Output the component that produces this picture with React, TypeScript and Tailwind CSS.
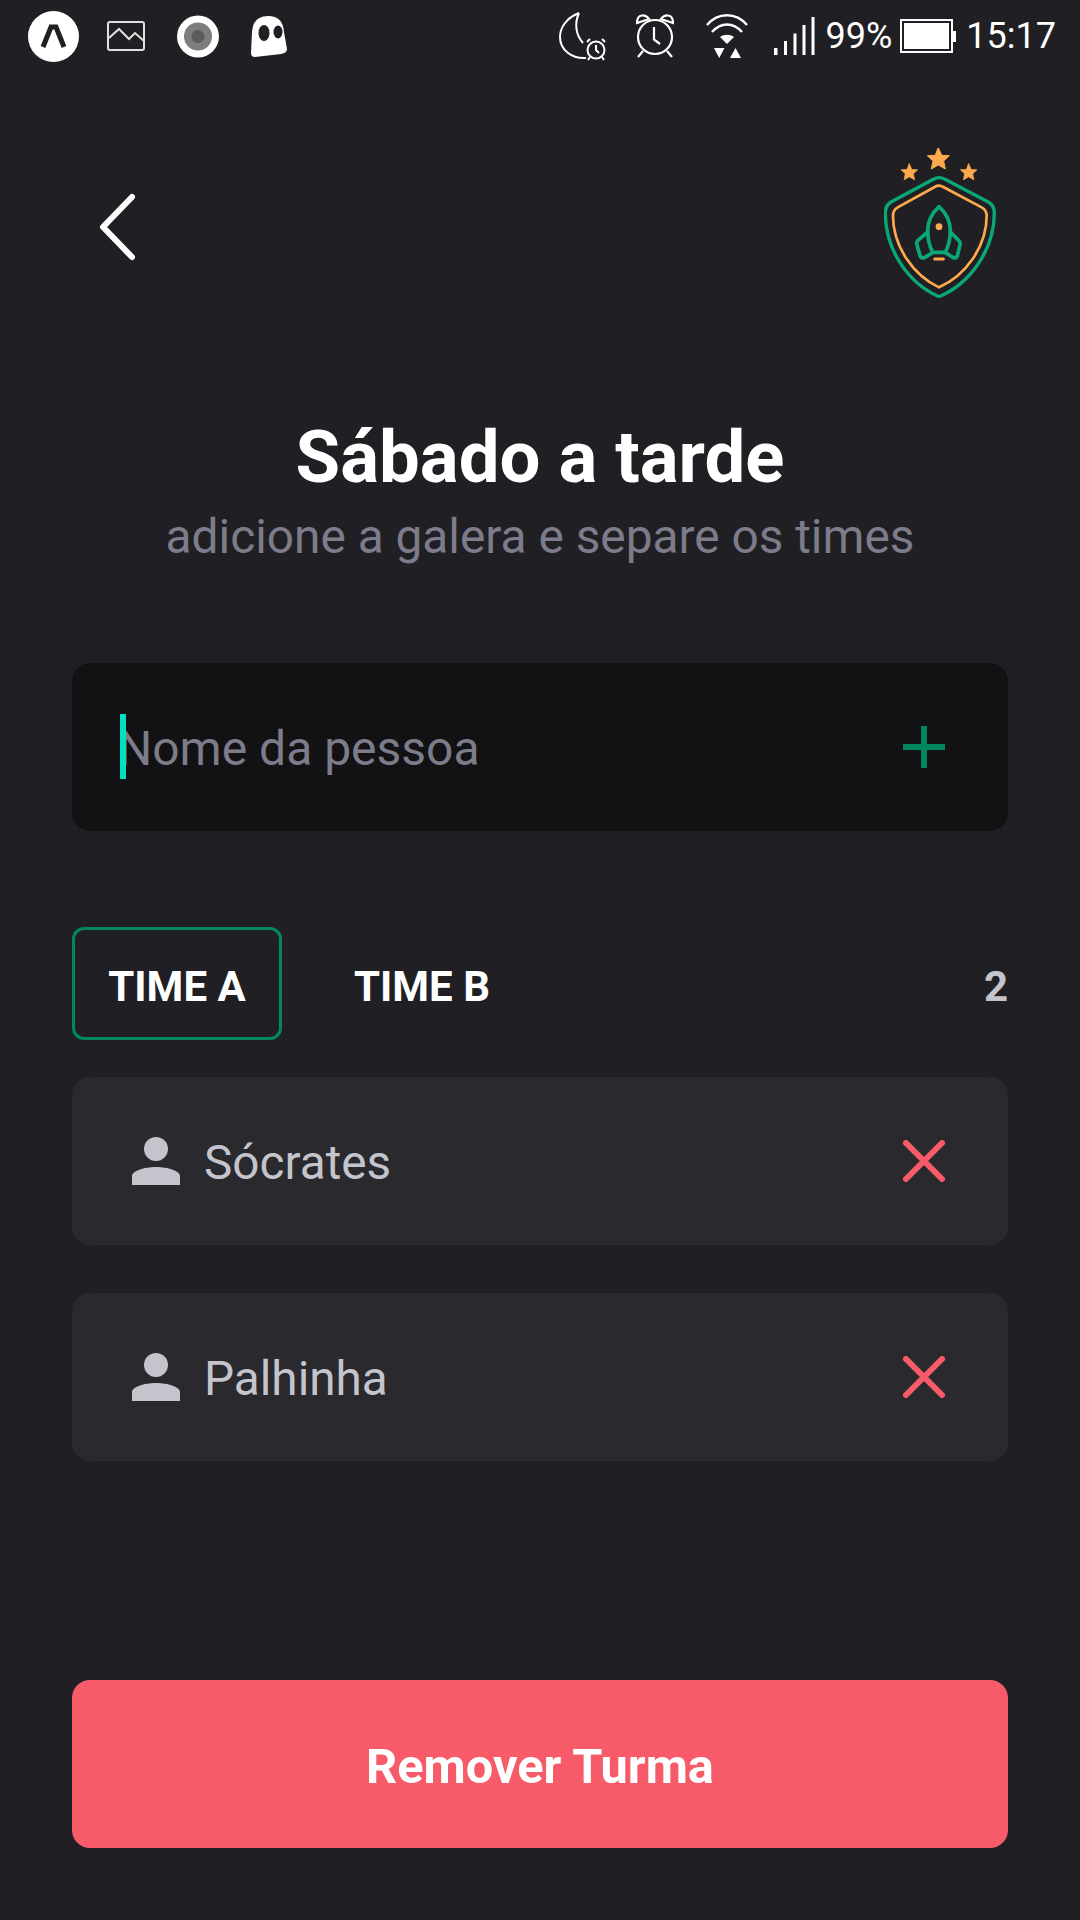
const font = { fontFamily: 'Roboto, sans-serif' }

function StatusLeft() {
	return (
		<div className="flex items-center">
			{/* app launcher */}
			<svg width="51" height="51" viewBox="0 0 51 51">
				<circle cx="25.5" cy="25.5" r="25.5" fill="#fff" />
				<path d="M15 36 L23 16 H28 L36 36" fill="none" stroke="#202024" strokeWidth="5" />
			</svg>
			<svg className="ml-[28px]" width="38" height="30" viewBox="0 0 38 30" fill="none" stroke="#e0e0e0" strokeWidth="2">
				<rect x="1" y="1" width="36" height="28" rx="2" />
				<path d="M2 17 L12 8 L22 18 L28 12 L37 20" />
			</svg>
			<svg className="ml-[32px]" width="42" height="43" viewBox="0 0 42 43">
				<circle cx="21" cy="21.5" r="21" fill="#fff" />
				<circle cx="21" cy="21.5" r="14" fill="#7d7d7d" />
				<circle cx="21" cy="21.5" r="6.5" fill="#5c5c5c" />
			</svg>
			<svg className="ml-[32px]" width="36" height="41" viewBox="0 0 36 41">
				<path d="M1 16 Q2 0 17 0 Q32 0 33 16 L36 33 Q36 37 30 38 L4 41 Q0 41 0 37 Z" fill="#fff" />
				<ellipse cx="13" cy="17" rx="5.5" ry="8" fill="#202024" />
				<ellipse cx="27" cy="16" rx="4.5" ry="6.5" fill="#202024" />
			</svg>
		</div>
	)
}

function StatusRight() {
	return (
		<div className="flex items-center text-[36px] leading-none text-white">
			<svg width="47" height="49" viewBox="0 0 47 49" fill="none" stroke="#fff" strokeWidth="2">
				<path d="M20 1 C7 6 1 16 1 25 C1 38 13 47 27 46 M20 1 C15 12 17 23 24 31" />
				<circle cx="37" cy="38" r="8.5" />
				<path d="M37 33 V38 L40 41 M28 30 L31 27 M46 30 L43 27 M31 45 L29 48 M43 45 L45 48" />
			</svg>
			<svg className="ml-[30px]" width="38" height="44" viewBox="0 0 38 44" fill="none" stroke="#fff" strokeWidth="2.2">
				<circle cx="19" cy="23" r="17" />
				<path d="M18 13 V25.5 L24 30" />
				<path d="M1 9 Q1 2 6 1.5 Q10 1 13 5 Z M37 9 Q37 2 32 1.5 Q28 1 25 5 Z" />
				<path d="M7 37 L2 43 M31 37 L36 43" />
			</svg>
			<svg className="ml-[32px]" width="42" height="45" viewBox="0 0 42 45">
				<g fill="none" stroke="#fff" strokeWidth="2.4">
					<path d="M1 11 C12 -2 30 -2 41 11" />
					<path d="M6 18 C15 8 27 8 36 18" />
				</g>
				<path d="M14 23 C18 20 24 20 28 23 L21 30 Z" fill="#fff" />
				<path d="M8 34 H18.5 L13.2 44 Z" fill="#fff" />
				<path d="M24 44 H35 L29.5 34 Z" fill="#fff" />
			</svg>
			<svg className="ml-[26px]" width="41" height="38" viewBox="0 0 41 38" fill="#fff">
				<rect x="0" y="31" width="3.5" height="7" />
				<rect x="10" y="24" width="3" height="14" />
				<rect x="19.5" y="16.5" width="3" height="21.5" />
				<rect x="28.5" y="8" width="3" height="30" />
				<rect x="37.5" y="0" width="3" height="38" />
			</svg>
			<span className="ml-[11px]">99%</span>
			<svg className="ml-[8px]" width="56" height="34" viewBox="0 0 56 34">
				<rect x="1" y="1" width="51" height="32" fill="none" stroke="#fff" strokeWidth="2" />
				<rect x="4" y="4" width="45" height="26" fill="#fff" />
				<rect x="53" y="12" width="3" height="11" fill="#fff" />
			</svg>
			<span className="ml-[10px]">15:17</span>
		</div>
	)
}

function Logo() {
	const star = 'M0 -34 L10 -11 L33 -10 L16 6 L21 30 L0 18 L-21 30 L-16 6 L-33 -10 L-10 -11 Z'
	return (
		<svg width="112" height="150" viewBox="72 55 336 450" fill="none" strokeLinejoin="round" strokeLinecap="round">
			<g fill="#ffa94d" stroke="#ffa94d" strokeWidth="3">
				<path d={star} transform="translate(235 88)" />
				<path d={star} transform="translate(148 128) scale(.75)" />
				<path d={star} transform="translate(326 128) scale(.75)" />
			</g>
			<path d="M237 144 Q246 144 255 149 L385 217 Q403 227 403 250 C403 360 330 462 237 501 C145 462 76 360 76 250 Q76 227 93 217 L220 149 Q229 144 237 144Z" stroke="#0aa877" strokeWidth="10" />
			<path d="M237 168 Q243 168 250 172 L365 233 Q380 241 380 258 C380 350 318 437 237 473 C160 437 99 350 99 258 Q99 241 113 233 L224 172 Q231 168 237 168Z" stroke="#ffa94d" strokeWidth="8" />
			<g stroke="#0aa877" strokeWidth="11">
				<path d="M237 231 C218 248 203 272 203 305 C203 330 210 352 218 368 H256 C264 352 271 330 271 305 C271 272 256 248 237 231Z" />
				<path d="M203 307 L174 332 Q168 338 171 346 L180 378 Q184 387 193 384 L218 369" />
				<path d="M271 307 L296 332 Q302 338 300 346 L292 378 Q288 387 280 384 L256 369" />
			</g>
			<circle cx="237" cy="291" r="10" fill="#ffa94d" />
			<path d="M224 388 H250" stroke="#ffa94d" strokeWidth="9" />
		</svg>
	)
}

function PersonRow({ name }: { name: string }) {
	return (
		<div className="flex h-[168px] items-center rounded-[18px] bg-[#29292e] pl-[60px] pr-[63px]">
			<svg width="48" height="48" viewBox="0 0 48 48" fill="#c4c4cc">
				<circle cx="24" cy="12" r="12" />
				<path d="M0 48 V39 C0 34 12 30 24 30 C36 30 48 34 48 39 V48 Z" />
			</svg>
			<span className="ml-[24px] pt-[5px] text-[47.7px] text-[#c4c4cc]">{name}</span>
			<svg className="ml-auto" width="42" height="42" viewBox="0 0 42 42" stroke="#f75a68" strokeWidth="6" strokeLinecap="round">
				<path d="M3 3 L39 39 M39 3 L3 39" />
			</svg>
		</div>
	)
}

export default function App() {
	return (
		<div className="flex h-[1920px] w-[1080px] flex-col bg-[#202024]" style={font}>
			<div className="flex h-[72px] items-center justify-between pl-[28px] pr-[24px]">
				<StatusLeft />
				<StatusRight />
			</div>

			<div className="flex flex-col px-[72px]">
				<div className="mt-[76px] flex items-start justify-between">
					<svg className="ml-[27px] mt-[45px]" width="37" height="68" viewBox="0 0 37 68" fill="none" stroke="#fff" strokeWidth="6" strokeLinecap="round" strokeLinejoin="round">
						<path d="M33 4 L4 34 L33 64" />
					</svg>
					<div className="mr-[12px]">
						<Logo />
					</div>
				</div>

				<h1 className="mt-[118px] text-center text-[72.5px] font-bold leading-[84px] text-white">Sábado a tarde</h1>
				<p className="mt-[9px] text-center text-[47.8px] leading-[56px] text-[#7c7c8a]">adicione a galera e separe os times</p>

				<div className="relative mt-[98px] flex h-[168px] items-center rounded-[18px] bg-[#121214] pl-[46px] pr-[63px]">
					<span className="absolute left-[48px] top-[51px] h-[65px] w-[6px] bg-[#00e0c2]" />
					<input
						className="mt-[3px] min-w-0 flex-1 bg-transparent text-[48px] text-white outline-none placeholder:text-[#7c7c8a]"
						placeholder="Nome da pessoa"
					/>
					<svg width="42" height="42" viewBox="0 0 42 42" stroke="#00875f" strokeWidth="6">
						<path d="M21 0 V42 M0 21 H42" />
					</svg>
				</div>

				<div className="mt-[96px] flex items-center">
					<div className="flex h-[113px] w-[210px] items-center justify-center rounded-[12px] border-[3px] border-[#00875f] pt-[5px] text-[42px] font-bold text-white">
						TIME A
					</div>
					<div className="ml-[53px] flex h-[113px] w-[174px] items-center justify-center pt-[5px] text-[42px] font-bold text-white">
						TIME B
					</div>
					<span className="ml-auto pt-[5px] text-[42px] font-bold text-[#c4c4cc]">2</span>
				</div>

				<div className="mt-[37px] flex flex-col gap-[48px]">
					<PersonRow name="Sócrates" />
					<PersonRow name="Palhinha" />
				</div>

				<button className="mt-[219px] h-[168px] rounded-[18px] bg-[#f75a68] pt-[5px] text-[48.7px] font-bold text-white">
					Remover Turma
				</button>
			</div>
		</div>
	)
}
